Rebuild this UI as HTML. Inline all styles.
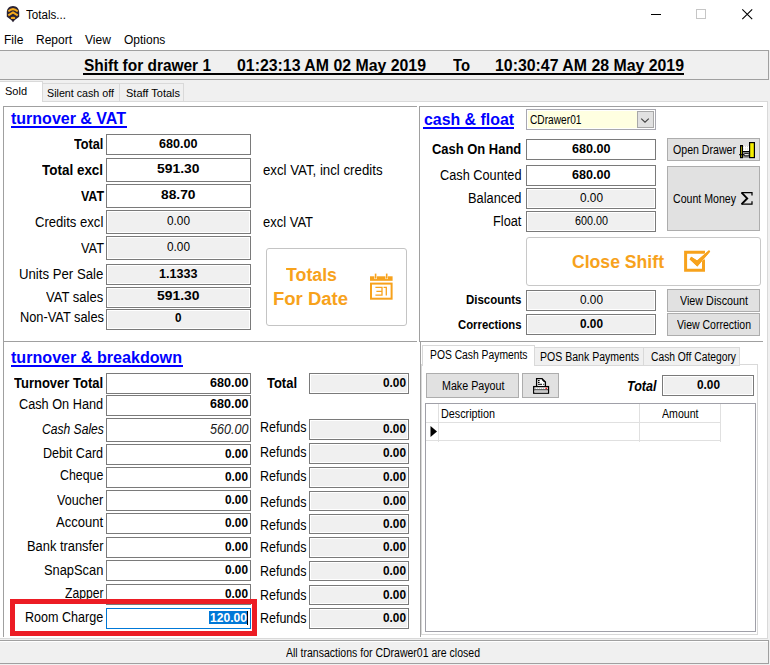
<!DOCTYPE html>
<html><head><meta charset="utf-8"><style>
html,body{margin:0;padding:0;width:770px;height:665px;overflow:hidden;background:#f0f0f0;}
.a{position:absolute;}
.t{white-space:pre;}
</style></head><body>
<div class="a" style="left:0px;top:0px;width:770px;height:50px;background:#ffffff;"></div>
<svg class="a" style="left:5px;top:5px" width="16" height="18" viewBox="0 0 16 18">
<path d="M8 1.1 C4.3 1.1 1.8 3.9 1.8 7.4 L1.8 11.7 L6.2 15 L8 17.2 L9.8 15 L14.2 11.7 L14.2 7.4 C14.2 3.9 11.7 1.1 8 1.1 Z" fill="#2b2334"/>
<path d="M3.3 6.4 Q8 1.9 12.7 6.4" stroke="#f6ab1c" stroke-width="2" fill="none"/>
<path d="M3.3 10.4 L8 7.4 L12.7 10.4" stroke="#f6ab1c" stroke-width="2" fill="none"/>
<ellipse cx="8" cy="12.9" rx="2.3" ry="1.2" fill="#f6ab1c"/>
</svg>
<div class="a" style="left:651px;top:14px;width:10px;height:1px;background:#000;"></div>
<div class="a" style="left:696px;top:9px;width:10px;height:10px;border:1px solid #c6c6c6;box-sizing:border-box;"></div>
<svg class="a" style="left:741px;top:8px" width="13" height="13" viewBox="0 0 13 13"><path d="M1.3 1.3 L11.2 11.2 M11.2 1.3 L1.3 11.2" stroke="#000" stroke-width="1.1"/></svg>
<div class="a" style="left:0px;top:50px;width:769px;height:30px;background:#f0f0f0;"></div>
<div class="a" style="left:0px;top:50px;width:769px;height:1px;background:#a0a0a0;"></div>
<div class="a" style="left:0px;top:79px;width:769px;height:1px;background:#a0a0a0;"></div>
<div class="a" style="left:768px;top:50px;width:1px;height:30px;background:#a0a0a0;"></div>
<div class="a" style="left:83px;top:73px;width:601px;height:2px;background:#000;"></div>
<div class="a" style="left:0px;top:101px;width:768px;height:538px;background:#ffffff;border:1px solid #d9d9d9;box-sizing:border-box;border-left:none;"></div>
<div class="a" style="left:42px;top:83px;width:78px;height:19px;background:#f0f0f0;border:1px solid #d9d9d9;box-sizing:border-box;"></div>
<div class="a" style="left:119px;top:83px;width:65px;height:19px;background:#f0f0f0;border:1px solid #d9d9d9;box-sizing:border-box;"></div>
<div class="a" style="left:0px;top:81px;width:43px;height:21px;background:#ffffff;border:1px solid #d9d9d9;box-sizing:border-box;border-bottom:none;border-left:none;"></div>
<div class="a" style="left:0px;top:640px;width:769px;height:24px;background:#f0f0f0;border:1px solid #a0a0a0;box-sizing:border-box;border-left:none;"></div>
<div class="a" style="left:0px;top:641px;width:768px;height:1px;background:#ffffff;"></div>
<div class="a" style="left:3px;top:106px;width:414px;height:1px;background:#a0a0a0;"></div>
<div class="a" style="left:3px;top:106px;width:1px;height:531px;background:#a0a0a0;"></div>
<div class="a" style="left:3px;top:341px;width:414px;height:1px;background:#a0a0a0;"></div>
<div class="a" style="left:419px;top:106px;width:344px;height:1px;background:#a0a0a0;"></div>
<div class="a" style="left:419px;top:106px;width:1px;height:236px;background:#a0a0a0;"></div>
<div class="a" style="left:420px;top:341px;width:343px;height:1px;background:#a0a0a0;"></div>
<div class="a" style="left:420px;top:341px;width:1px;height:296px;background:#a0a0a0;"></div>
<div class="a" style="left:11px;top:126px;width:116px;height:2px;background:#0000ff;"></div>
<div class="a" style="left:106px;top:134px;width:145px;height:21px;background:#fff;border:1px solid #7a7a7a;box-sizing:border-box;"></div>
<div class="a" style="left:106px;top:158px;width:145px;height:24px;background:#fff;border:1px solid #7a7a7a;box-sizing:border-box;"></div>
<div class="a" style="left:106px;top:184px;width:145px;height:24px;background:#fff;border:1px solid #7a7a7a;box-sizing:border-box;"></div>
<div class="a" style="left:106px;top:210px;width:145px;height:24px;background:#f0f0f0;border:1px solid #7a7a7a;box-sizing:border-box;box-shadow:inset 0 0 0 1px #fff;"></div>
<div class="a" style="left:106px;top:236px;width:145px;height:24px;background:#f0f0f0;border:1px solid #7a7a7a;box-sizing:border-box;box-shadow:inset 0 0 0 1px #fff;"></div>
<div class="a" style="left:106px;top:264px;width:145px;height:21px;background:#f0f0f0;border:1px solid #7a7a7a;box-sizing:border-box;box-shadow:inset 0 0 0 1px #fff;"></div>
<div class="a" style="left:106px;top:287px;width:145px;height:21px;background:#f0f0f0;border:1px solid #7a7a7a;box-sizing:border-box;box-shadow:inset 0 0 0 1px #fff;"></div>
<div class="a" style="left:106px;top:309px;width:145px;height:21px;background:#f0f0f0;border:1px solid #7a7a7a;box-sizing:border-box;box-shadow:inset 0 0 0 1px #fff;"></div>
<div class="a" style="left:266px;top:248px;width:141px;height:78px;background:#fff;border:1px solid #c4c4c4;box-sizing:border-box;border-radius:3px;"></div>
<svg class="a" style="left:368px;top:272px" width="27" height="30" viewBox="0 0 27 30">
<rect x="2" y="4.3" width="22.6" height="4.5" fill="#f7a21c"/>
<rect x="6.8" y="1.6" width="1.6" height="5" fill="#f7a21c" stroke="#fff" stroke-width="0.9" paint-order="stroke"/>
<rect x="17.9" y="1.6" width="1.6" height="5" fill="#f7a21c" stroke="#fff" stroke-width="0.9" paint-order="stroke"/>
<rect x="3" y="11.6" width="20.6" height="15.1" fill="none" stroke="#f7a21c" stroke-width="2"/>
<path d="M7.4 15.4 H14 V23.2 H7.4 M8.4 19.3 H14 M15.6 15.4 H18.3 V23.6" fill="none" stroke="#f7a21c" stroke-width="1.3"/>
</svg>
<div class="a" style="left:11px;top:365px;width:172px;height:2px;background:#0000ff;"></div>
<div class="a" style="left:106px;top:373px;width:145px;height:21px;background:#fff;border:1px solid #7a7a7a;box-sizing:border-box;"></div>
<div class="a" style="left:106px;top:395px;width:145px;height:21px;background:#fff;border:1px solid #7a7a7a;box-sizing:border-box;"></div>
<div class="a" style="left:106px;top:418px;width:145px;height:24px;background:#fff;border:1px solid #7a7a7a;box-sizing:border-box;"></div>
<div class="a" style="left:106px;top:444px;width:145px;height:21px;background:#fff;border:1px solid #7a7a7a;box-sizing:border-box;"></div>
<div class="a" style="left:106px;top:467px;width:145px;height:21px;background:#fff;border:1px solid #7a7a7a;box-sizing:border-box;"></div>
<div class="a" style="left:106px;top:490px;width:145px;height:21px;background:#fff;border:1px solid #7a7a7a;box-sizing:border-box;"></div>
<div class="a" style="left:106px;top:513px;width:145px;height:21px;background:#fff;border:1px solid #7a7a7a;box-sizing:border-box;"></div>
<div class="a" style="left:106px;top:537px;width:145px;height:21px;background:#fff;border:1px solid #7a7a7a;box-sizing:border-box;"></div>
<div class="a" style="left:106px;top:560px;width:145px;height:21px;background:#fff;border:1px solid #7a7a7a;box-sizing:border-box;"></div>
<div class="a" style="left:106px;top:584px;width:145px;height:21px;background:#fff;border:1px solid #7a7a7a;box-sizing:border-box;"></div>
<div class="a" style="left:106px;top:608px;width:145px;height:21px;background:#fff;border:1px solid #0078d7;box-sizing:border-box;"></div>
<div class="a" style="left:209px;top:611px;width:38px;height:13px;background:#0078d7;"></div>
<div class="a" style="left:247px;top:611px;width:1px;height:14px;background:#000;"></div>
<div class="a" style="left:309px;top:373px;width:100px;height:21px;background:#f0f0f0;border:1px solid #7a7a7a;box-sizing:border-box;box-shadow:inset 0 0 0 1px #fff;"></div>
<div class="a" style="left:309px;top:419px;width:100px;height:21px;background:#f0f0f0;border:1px solid #7a7a7a;box-sizing:border-box;box-shadow:inset 0 0 0 1px #fff;"></div>
<div class="a" style="left:309px;top:443px;width:100px;height:21px;background:#f0f0f0;border:1px solid #7a7a7a;box-sizing:border-box;box-shadow:inset 0 0 0 1px #fff;"></div>
<div class="a" style="left:309px;top:467px;width:100px;height:21px;background:#f0f0f0;border:1px solid #7a7a7a;box-sizing:border-box;box-shadow:inset 0 0 0 1px #fff;"></div>
<div class="a" style="left:309px;top:491px;width:100px;height:20px;background:#f0f0f0;border:1px solid #7a7a7a;box-sizing:border-box;box-shadow:inset 0 0 0 1px #fff;"></div>
<div class="a" style="left:309px;top:514px;width:100px;height:20px;background:#f0f0f0;border:1px solid #7a7a7a;box-sizing:border-box;box-shadow:inset 0 0 0 1px #fff;"></div>
<div class="a" style="left:309px;top:537px;width:100px;height:21px;background:#f0f0f0;border:1px solid #7a7a7a;box-sizing:border-box;box-shadow:inset 0 0 0 1px #fff;"></div>
<div class="a" style="left:309px;top:561px;width:100px;height:20px;background:#f0f0f0;border:1px solid #7a7a7a;box-sizing:border-box;box-shadow:inset 0 0 0 1px #fff;"></div>
<div class="a" style="left:309px;top:585px;width:100px;height:20px;background:#f0f0f0;border:1px solid #7a7a7a;box-sizing:border-box;box-shadow:inset 0 0 0 1px #fff;"></div>
<div class="a" style="left:309px;top:608px;width:100px;height:21px;background:#f0f0f0;border:1px solid #7a7a7a;box-sizing:border-box;box-shadow:inset 0 0 0 1px #fff;"></div>
<div class="a" style="left:423px;top:127px;width:91px;height:2px;background:#0000ff;"></div>
<div class="a" style="left:526px;top:109px;width:130px;height:21px;background:#ffffe1;border:1px solid #a8a8b0;box-sizing:border-box;box-shadow:inset 0 0 0 1px #fff;"></div>
<div class="a" style="left:637px;top:111px;width:17px;height:17px;background:#e1e1e1;border:1px solid #a8a8a8;box-sizing:border-box;"></div>
<svg class="a" style="left:640px;top:115px" width="11" height="11" viewBox="0 0 11 11"><path d="M1.2 3.6 L5 7.2 L8.8 3.6" stroke="#404040" stroke-width="1.1" fill="none"/></svg>
<div class="a" style="left:526px;top:139px;width:130px;height:21px;background:#fff;border:1px solid #7a7a7a;box-sizing:border-box;"></div>
<div class="a" style="left:526px;top:165px;width:130px;height:21px;background:#fff;border:1px solid #7a7a7a;box-sizing:border-box;"></div>
<div class="a" style="left:526px;top:188px;width:130px;height:21px;background:#f0f0f0;border:1px solid #7a7a7a;box-sizing:border-box;box-shadow:inset 0 0 0 1px #fff;"></div>
<div class="a" style="left:526px;top:211px;width:130px;height:21px;background:#f0f0f0;border:1px solid #7a7a7a;box-sizing:border-box;box-shadow:inset 0 0 0 1px #fff;"></div>
<div class="a" style="left:667px;top:138px;width:93px;height:23px;background:#e1e1e1;border:1px solid #adadad;box-sizing:border-box;"></div>
<svg class="a" style="left:738px;top:141px" width="19" height="18" viewBox="0 0 19 18">
<rect x="5" y="5" width="6.5" height="5.6" fill="#ffffff"/>
<path d="M5 5.6 H11 M5 8 H11" stroke="#c0c0c0" stroke-width="0.8" stroke-dasharray="1 1"/>
<rect x="5" y="10.8" width="6.5" height="6" fill="#8c8c8c"/>
<path d="M5 10.5 H11.5" stroke="#000" stroke-width="1"/>
<rect x="11.6" y="1.6" width="4.8" height="15" fill="#f5ee00" stroke="#000" stroke-width="1.2"/>
<rect x="2.6" y="4.6" width="1.8" height="12" fill="#f5ee00" stroke="#000" stroke-width="1.2"/>
<path d="M1 13.7 H6" stroke="#000" stroke-width="1"/>
<rect x="6" y="12.6" width="5.2" height="2.2" rx="1" fill="#fff" stroke="#000" stroke-width="0.9"/>
</svg>
<div class="a" style="left:667px;top:166px;width:93px;height:65px;background:#e1e1e1;border:1px solid #adadad;box-sizing:border-box;"></div>
<svg class="a" style="left:739px;top:191px" width="16" height="16" viewBox="0 0 16 16"><path d="M13 4.6 V1.6 H2.4 M2.4 13.1 H13 V10.2" fill="none" stroke="#000" stroke-width="1.25"/><path d="M2.6 1.6 L8.2 7.4 L2.6 13.1" fill="none" stroke="#000" stroke-width="1.9"/></svg>
<div class="a" style="left:526px;top:237px;width:235px;height:49px;background:#fff;border:1px solid #c8c8c8;box-sizing:border-box;border-radius:3px;"></div>
<svg class="a" style="left:683px;top:249px" width="30" height="25" viewBox="0 0 30 25">
<path d="M22 3.3 H2.6 V21.2 H20.5 V10.5" fill="none" stroke="#f7a21c" stroke-width="3"/>
<path d="M8.2 7.8 L14.1 11.6 L26 1.2 L27.2 2.4 L14.3 17.6 L6.6 10.2 Z" fill="#f7a21c" stroke="#fff" stroke-width="0.8" paint-order="stroke"/>
<path d="M8.2 7.8 L14.1 11.6 L26 1.2 L27.2 2.4 L14.3 17.6 L6.6 10.2 Z" fill="#f7a21c"/>
</svg>
<div class="a" style="left:526px;top:290px;width:130px;height:21px;background:#f0f0f0;border:1px solid #7a7a7a;box-sizing:border-box;box-shadow:inset 0 0 0 1px #fff;"></div>
<div class="a" style="left:526px;top:314px;width:130px;height:21px;background:#f0f0f0;border:1px solid #7a7a7a;box-sizing:border-box;box-shadow:inset 0 0 0 1px #fff;"></div>
<div class="a" style="left:667px;top:289px;width:93px;height:23px;background:#e1e1e1;border:1px solid #adadad;box-sizing:border-box;"></div>
<div class="a" style="left:667px;top:313px;width:93px;height:23px;background:#e1e1e1;border:1px solid #adadad;box-sizing:border-box;"></div>
<div class="a" style="left:421px;top:364px;width:337px;height:271px;background:#fff;border:1px solid #d9d9d9;box-sizing:border-box;"></div>
<div class="a" style="left:534px;top:347px;width:110px;height:19px;background:#f0f0f0;border:1px solid #d9d9d9;box-sizing:border-box;"></div>
<div class="a" style="left:643px;top:347px;width:97px;height:19px;background:#f0f0f0;border:1px solid #d9d9d9;box-sizing:border-box;"></div>
<div class="a" style="left:422px;top:345px;width:113px;height:21px;background:#fff;border:1px solid #d9d9d9;box-sizing:border-box;border-bottom:none;"></div>
<div class="a" style="left:426px;top:373px;width:93px;height:25px;background:#e1e1e1;border:1px solid #adadad;box-sizing:border-box;"></div>
<div class="a" style="left:522px;top:373px;width:37px;height:25px;background:#e1e1e1;border:1px solid #adadad;box-sizing:border-box;"></div>
<svg class="a" style="left:532px;top:377px" width="18" height="18" viewBox="0 0 18 18">
<path d="M4.6 9.2 V1.6 H10 L13.4 5 V9.2" fill="#fff" stroke="#000" stroke-width="1.3"/>
<path d="M10 1.6 Q10.4 4.6 13.4 5" fill="none" stroke="#000" stroke-width="1"/>
<rect x="6" y="3" width="1.6" height="1.2" fill="#000"/>
<rect x="6" y="5" width="1.6" height="1" fill="#000"/>
<rect x="6" y="6.8" width="4" height="1" fill="#000"/>
<rect x="11.2" y="6.8" width="1" height="1" fill="#000"/>
<rect x="1.7" y="9.6" width="14.8" height="6.6" fill="#fff" stroke="#000" stroke-width="1.3"/>
<path d="M2.3 12.9 H16" stroke="#000" stroke-width="1"/>
<rect x="2.4" y="13.4" width="13.5" height="2.2" fill="#c8c8c8"/>
<path d="M3 11.3 H13" stroke="#b0b0b0" stroke-width="0.8" stroke-dasharray="1 1"/>
<circle cx="14.2" cy="11.4" r="0.8" fill="#f00"/>
</svg>
<div class="a" style="left:662px;top:375px;width:92px;height:21px;background:#f0f0f0;border:1px solid #7a7a7a;box-sizing:border-box;box-shadow:inset 0 0 0 1px #fff;"></div>
<div class="a" style="left:425px;top:403px;width:331px;height:229px;background:#fff;border:1px solid #a0a0a8;box-sizing:border-box;"></div>
<div class="a" style="left:438px;top:404px;width:1px;height:38px;background:#e0e0e0;"></div>
<div class="a" style="left:426px;top:422px;width:295px;height:1px;background:#e0e0e0;"></div>
<div class="a" style="left:426px;top:440px;width:295px;height:1px;background:#e0e0e0;"></div>
<div class="a" style="left:639px;top:404px;width:1px;height:38px;background:#e0e0e0;"></div>
<div class="a" style="left:720px;top:404px;width:1px;height:38px;background:#e0e0e0;"></div>
<svg class="a" style="left:430px;top:425px" width="8" height="13" viewBox="0 0 8 13"><path d="M0.5 1 L7 6.5 L0.5 12 Z" fill="#000"/></svg>
<div class="a t" style="left:26.00px;top:9px;font:normal normal 12px/12px 'Liberation Sans', sans-serif;color:#000;transform:scaleX(0.9671);transform-origin:0 0;">Totals...</div>
<div class="a t" style="left:4.00px;top:34px;font:normal normal 12px/12px 'Liberation Sans', sans-serif;color:#000;">File</div>
<div class="a t" style="left:36.00px;top:34px;font:normal normal 12px/12px 'Liberation Sans', sans-serif;color:#000;">Report</div>
<div class="a t" style="left:85.00px;top:34px;font:normal normal 12px/12px 'Liberation Sans', sans-serif;color:#000;">View</div>
<div class="a t" style="left:124.00px;top:34px;font:normal normal 12px/12px 'Liberation Sans', sans-serif;color:#000;">Options</div>
<div class="a t" style="left:84.00px;top:58px;font:normal bold 16px/16px 'Liberation Sans', sans-serif;color:#000;transform:scaleX(0.9652);transform-origin:0 0;">Shift for drawer 1</div>
<div class="a t" style="left:237.00px;top:58px;font:normal bold 16px/16px 'Liberation Sans', sans-serif;color:#000;transform:scaleX(0.9914);transform-origin:0 0;">01:23:13 AM 02 May 2019</div>
<div class="a t" style="left:453.00px;top:58px;font:normal bold 16px/16px 'Liberation Sans', sans-serif;color:#000;transform:scaleX(0.9260);transform-origin:0 0;">To</div>
<div class="a t" style="left:495.00px;top:58px;font:normal bold 16px/16px 'Liberation Sans', sans-serif;color:#000;transform:scaleX(0.9914);transform-origin:0 0;">10:30:47 AM 28 May 2019</div>
<div class="a t" style="left:5.00px;top:86px;font:normal normal 11px/11px 'Liberation Sans', sans-serif;color:#000;">Sold</div>
<div class="a t" style="left:47.00px;top:88px;font:normal normal 11px/11px 'Liberation Sans', sans-serif;color:#000;transform:scaleX(0.9723);transform-origin:0 0;">Silent cash off</div>
<div class="a t" style="left:126.00px;top:88px;font:normal normal 11px/11px 'Liberation Sans', sans-serif;color:#000;">Staff Totals</div>
<div class="a t" style="left:286.00px;top:647px;font:normal normal 12px/12px 'Liberation Sans', sans-serif;color:#000;transform:scaleX(0.8761);transform-origin:0 0;">All transactions for CDrawer01 are closed</div>
<div class="a t" style="left:11.00px;top:111px;font:normal bold 16px/16px 'Liberation Sans', sans-serif;color:#0000ff;">turnover &amp; VAT</div>
<div class="a t" style="left:74.10px;top:137px;font:normal bold 14px/14px 'Liberation Sans', sans-serif;color:#000;transform:scaleX(0.9072);transform-origin:0 0;">Total</div>
<div class="a t" style="left:158.75px;top:138px;font:normal bold 12px/12px 'Liberation Sans', sans-serif;color:#000;transform:scaleX(1.0490);transform-origin:0 0;">680.00</div>
<div class="a t" style="left:42.40px;top:163px;font:normal bold 14px/14px 'Liberation Sans', sans-serif;color:#000;transform:scaleX(0.9615);transform-origin:0 0;">Total excl</div>
<div class="a t" style="left:156.75px;top:163px;font:normal bold 12px/12px 'Liberation Sans', sans-serif;color:#000;transform:scaleX(1.1579);transform-origin:0 0;">591.30</div>
<div class="a t" style="left:80.50px;top:189px;font:normal bold 14px/14px 'Liberation Sans', sans-serif;color:#000;transform:scaleX(0.8873);transform-origin:0 0;">VAT</div>
<div class="a t" style="left:160.75px;top:189px;font:normal bold 12px/12px 'Liberation Sans', sans-serif;color:#000;transform:scaleX(1.1488);transform-origin:0 0;">88.70</div>
<div class="a t" style="left:35.20px;top:215px;font:normal normal 14px/14px 'Liberation Sans', sans-serif;color:#000;transform:scaleX(0.9338);transform-origin:0 0;">Credits excl</div>
<div class="a t" style="left:166.50px;top:215px;font:normal normal 12px/12px 'Liberation Sans', sans-serif;color:#000;transform:scaleX(0.9846);transform-origin:0 0;">0.00</div>
<div class="a t" style="left:80.50px;top:241px;font:normal normal 14px/14px 'Liberation Sans', sans-serif;color:#000;transform:scaleX(0.9143);transform-origin:0 0;">VAT</div>
<div class="a t" style="left:166.50px;top:241px;font:normal normal 12px/12px 'Liberation Sans', sans-serif;color:#000;transform:scaleX(0.9846);transform-origin:0 0;">0.00</div>
<div class="a t" style="left:19.20px;top:267px;font:normal normal 14px/14px 'Liberation Sans', sans-serif;color:#000;transform:scaleX(0.9421);transform-origin:0 0;">Units Per Sale</div>
<div class="a t" style="left:158.75px;top:268px;font:normal bold 12px/12px 'Liberation Sans', sans-serif;color:#000;transform:scaleX(1.0490);transform-origin:0 0;">1.1333</div>
<div class="a t" style="left:46.30px;top:290px;font:normal normal 14px/14px 'Liberation Sans', sans-serif;color:#000;transform:scaleX(0.9306);transform-origin:0 0;">VAT sales</div>
<div class="a t" style="left:156.75px;top:290px;font:normal bold 12px/12px 'Liberation Sans', sans-serif;color:#000;transform:scaleX(1.1579);transform-origin:0 0;">591.30</div>
<div class="a t" style="left:19.50px;top:310px;font:normal normal 14px/14px 'Liberation Sans', sans-serif;color:#000;transform:scaleX(0.9148);transform-origin:0 0;">Non-VAT sales</div>
<div class="a t" style="left:174.75px;top:312px;font:normal bold 12px/12px 'Liberation Sans', sans-serif;color:#000;transform:scaleX(0.9720);transform-origin:0 0;">0</div>
<div class="a t" style="left:263.00px;top:163px;font:normal normal 14px/14px 'Liberation Sans', sans-serif;color:#000;transform:scaleX(0.9462);transform-origin:0 0;">excl VAT, incl credits</div>
<div class="a t" style="left:262.50px;top:215px;font:normal normal 14px/14px 'Liberation Sans', sans-serif;color:#000;transform:scaleX(0.9270);transform-origin:0 0;">excl VAT</div>
<div class="a t" style="left:285.50px;top:266px;font:normal bold 18px/18px 'Liberation Sans', sans-serif;color:#f7a21c;transform:scaleX(0.9870);transform-origin:0 0;">Totals</div>
<div class="a t" style="left:273.00px;top:290px;font:normal bold 18px/18px 'Liberation Sans', sans-serif;color:#f7a21c;transform:scaleX(1.0272);transform-origin:0 0;">For Date</div>
<div class="a t" style="left:11.00px;top:350px;font:normal bold 16px/16px 'Liberation Sans', sans-serif;color:#0000ff;transform:scaleX(1.0070);transform-origin:0 0;">turnover &amp; breakdown</div>
<div class="a t" style="left:14.40px;top:375.5px;font:normal bold 14px/14px 'Liberation Sans', sans-serif;color:#000;transform:scaleX(0.9287);transform-origin:0 0;">Turnover Total</div>
<div class="a t" style="left:209.50px;top:377px;font:normal bold 12px/12px 'Liberation Sans', sans-serif;color:#000;transform:scaleX(1.0490);transform-origin:0 0;">680.00</div>
<div class="a t" style="left:19.40px;top:397px;font:normal normal 14px/14px 'Liberation Sans', sans-serif;color:#000;transform:scaleX(0.9081);transform-origin:0 0;">Cash On Hand</div>
<div class="a t" style="left:209.50px;top:398px;font:normal bold 12px/12px 'Liberation Sans', sans-serif;color:#000;transform:scaleX(1.0490);transform-origin:0 0;">680.00</div>
<div class="a t" style="left:41.60px;top:422px;font:italic normal 14px/14px 'Liberation Sans', sans-serif;color:#000;transform:scaleX(0.8646);transform-origin:0 0;">Cash Sales</div>
<div class="a t" style="left:210.00px;top:422px;font:italic normal 14px/14px 'Liberation Sans', sans-serif;color:#1a1a1a;transform:scaleX(0.8989);transform-origin:0 0;">560.00</div>
<div class="a t" style="left:43.40px;top:445.5px;font:normal normal 14px/14px 'Liberation Sans', sans-serif;color:#000;transform:scaleX(0.8981);transform-origin:0 0;">Debit Card</div>
<div class="a t" style="left:225.00px;top:448px;font:normal bold 12px/12px 'Liberation Sans', sans-serif;color:#000;transform:scaleX(0.9846);transform-origin:0 0;">0.00</div>
<div class="a t" style="left:60.20px;top:468px;font:normal normal 14px/14px 'Liberation Sans', sans-serif;color:#000;transform:scaleX(0.8828);transform-origin:0 0;">Cheque</div>
<div class="a t" style="left:225.00px;top:471px;font:normal bold 12px/12px 'Liberation Sans', sans-serif;color:#000;transform:scaleX(0.9846);transform-origin:0 0;">0.00</div>
<div class="a t" style="left:57.30px;top:493px;font:normal normal 14px/14px 'Liberation Sans', sans-serif;color:#000;transform:scaleX(0.8993);transform-origin:0 0;">Voucher</div>
<div class="a t" style="left:225.00px;top:494px;font:normal bold 12px/12px 'Liberation Sans', sans-serif;color:#000;transform:scaleX(0.9846);transform-origin:0 0;">0.00</div>
<div class="a t" style="left:56.30px;top:515px;font:normal normal 14px/14px 'Liberation Sans', sans-serif;color:#000;transform:scaleX(0.9329);transform-origin:0 0;">Account</div>
<div class="a t" style="left:225.00px;top:517px;font:normal bold 12px/12px 'Liberation Sans', sans-serif;color:#000;transform:scaleX(0.9846);transform-origin:0 0;">0.00</div>
<div class="a t" style="left:27.00px;top:539px;font:normal normal 14px/14px 'Liberation Sans', sans-serif;color:#000;transform:scaleX(0.9187);transform-origin:0 0;">Bank transfer</div>
<div class="a t" style="left:225.00px;top:541px;font:normal bold 12px/12px 'Liberation Sans', sans-serif;color:#000;transform:scaleX(0.9846);transform-origin:0 0;">0.00</div>
<div class="a t" style="left:44.20px;top:563px;font:normal normal 14px/14px 'Liberation Sans', sans-serif;color:#000;transform:scaleX(0.9178);transform-origin:0 0;">SnapScan</div>
<div class="a t" style="left:225.00px;top:564px;font:normal bold 12px/12px 'Liberation Sans', sans-serif;color:#000;transform:scaleX(0.9846);transform-origin:0 0;">0.00</div>
<div class="a t" style="left:65.00px;top:586px;font:normal normal 14px/14px 'Liberation Sans', sans-serif;color:#000;transform:scaleX(0.8679);transform-origin:0 0;">Zapper</div>
<div class="a t" style="left:225.00px;top:588px;font:normal bold 12px/12px 'Liberation Sans', sans-serif;color:#000;transform:scaleX(0.9846);transform-origin:0 0;">0.00</div>
<div class="a t" style="left:25.30px;top:610px;font:normal normal 14px/14px 'Liberation Sans', sans-serif;color:#000;transform:scaleX(0.8972);transform-origin:0 0;">Room Charge</div>
<div class="a t" style="left:210.00px;top:612px;font:normal bold 12px/12px 'Liberation Sans', sans-serif;color:#fff;transform:scaleX(1.0081);transform-origin:0 0;">120.00</div>
<div class="a t" style="left:266.50px;top:375.5px;font:normal bold 14px/14px 'Liberation Sans', sans-serif;color:#000;transform:scaleX(0.9257);transform-origin:0 0;">Total</div>
<div class="a t" style="left:383.00px;top:377px;font:normal bold 12px/12px 'Liberation Sans', sans-serif;color:#000;transform:scaleX(0.9846);transform-origin:0 0;">0.00</div>
<div class="a t" style="left:260.00px;top:420px;font:normal normal 14px/14px 'Liberation Sans', sans-serif;color:#000;transform:scaleX(0.8916);transform-origin:0 0;">Refunds</div>
<div class="a t" style="left:383.00px;top:423px;font:normal bold 12px/12px 'Liberation Sans', sans-serif;color:#000;transform:scaleX(0.9846);transform-origin:0 0;">0.00</div>
<div class="a t" style="left:260.00px;top:445px;font:normal normal 14px/14px 'Liberation Sans', sans-serif;color:#000;transform:scaleX(0.8916);transform-origin:0 0;">Refunds</div>
<div class="a t" style="left:383.00px;top:447px;font:normal bold 12px/12px 'Liberation Sans', sans-serif;color:#000;transform:scaleX(0.9846);transform-origin:0 0;">0.00</div>
<div class="a t" style="left:260.00px;top:469px;font:normal normal 14px/14px 'Liberation Sans', sans-serif;color:#000;transform:scaleX(0.8916);transform-origin:0 0;">Refunds</div>
<div class="a t" style="left:383.00px;top:471px;font:normal bold 12px/12px 'Liberation Sans', sans-serif;color:#000;transform:scaleX(0.9846);transform-origin:0 0;">0.00</div>
<div class="a t" style="left:260.00px;top:495px;font:normal normal 14px/14px 'Liberation Sans', sans-serif;color:#000;transform:scaleX(0.8916);transform-origin:0 0;">Refunds</div>
<div class="a t" style="left:383.00px;top:495px;font:normal bold 12px/12px 'Liberation Sans', sans-serif;color:#000;transform:scaleX(0.9846);transform-origin:0 0;">0.00</div>
<div class="a t" style="left:260.00px;top:517.5px;font:normal normal 14px/14px 'Liberation Sans', sans-serif;color:#000;transform:scaleX(0.8916);transform-origin:0 0;">Refunds</div>
<div class="a t" style="left:383.00px;top:518px;font:normal bold 12px/12px 'Liberation Sans', sans-serif;color:#000;transform:scaleX(0.9846);transform-origin:0 0;">0.00</div>
<div class="a t" style="left:260.00px;top:540px;font:normal normal 14px/14px 'Liberation Sans', sans-serif;color:#000;transform:scaleX(0.8916);transform-origin:0 0;">Refunds</div>
<div class="a t" style="left:383.00px;top:541px;font:normal bold 12px/12px 'Liberation Sans', sans-serif;color:#000;transform:scaleX(0.9846);transform-origin:0 0;">0.00</div>
<div class="a t" style="left:260.00px;top:563.5px;font:normal normal 14px/14px 'Liberation Sans', sans-serif;color:#000;transform:scaleX(0.8916);transform-origin:0 0;">Refunds</div>
<div class="a t" style="left:383.00px;top:565px;font:normal bold 12px/12px 'Liberation Sans', sans-serif;color:#000;transform:scaleX(0.9846);transform-origin:0 0;">0.00</div>
<div class="a t" style="left:260.00px;top:587.5px;font:normal normal 14px/14px 'Liberation Sans', sans-serif;color:#000;transform:scaleX(0.8916);transform-origin:0 0;">Refunds</div>
<div class="a t" style="left:383.00px;top:589px;font:normal bold 12px/12px 'Liberation Sans', sans-serif;color:#000;transform:scaleX(0.9846);transform-origin:0 0;">0.00</div>
<div class="a t" style="left:260.00px;top:611px;font:normal normal 14px/14px 'Liberation Sans', sans-serif;color:#000;transform:scaleX(0.8916);transform-origin:0 0;">Refunds</div>
<div class="a t" style="left:383.00px;top:612px;font:normal bold 12px/12px 'Liberation Sans', sans-serif;color:#000;transform:scaleX(0.9846);transform-origin:0 0;">0.00</div>
<div class="a t" style="left:423.50px;top:112px;font:normal bold 16px/16px 'Liberation Sans', sans-serif;color:#0000ff;transform:scaleX(0.9924);transform-origin:0 0;">cash &amp; float</div>
<div class="a t" style="left:530.00px;top:113.5px;font:normal normal 12px/12px 'Liberation Sans', sans-serif;color:#000;transform:scaleX(0.8486);transform-origin:0 0;">CDrawer01</div>
<div class="a t" style="left:432.30px;top:141.5px;font:normal bold 14px/14px 'Liberation Sans', sans-serif;color:#000;transform:scaleX(0.9247);transform-origin:0 0;">Cash On Hand</div>
<div class="a t" style="left:571.75px;top:142.5px;font:normal bold 12px/12px 'Liberation Sans', sans-serif;color:#000;transform:scaleX(1.0490);transform-origin:0 0;">680.00</div>
<div class="a t" style="left:440.00px;top:167.5px;font:normal normal 14px/14px 'Liberation Sans', sans-serif;color:#000;transform:scaleX(0.9105);transform-origin:0 0;">Cash Counted</div>
<div class="a t" style="left:571.75px;top:169px;font:normal bold 12px/12px 'Liberation Sans', sans-serif;color:#000;transform:scaleX(1.0490);transform-origin:0 0;">680.00</div>
<div class="a t" style="left:468.00px;top:190.5px;font:normal normal 14px/14px 'Liberation Sans', sans-serif;color:#000;transform:scaleX(0.9162);transform-origin:0 0;">Balanced</div>
<div class="a t" style="left:579.50px;top:191.5px;font:normal normal 12px/12px 'Liberation Sans', sans-serif;color:#000;transform:scaleX(0.9846);transform-origin:0 0;">0.00</div>
<div class="a t" style="left:493.10px;top:213.5px;font:normal normal 14px/14px 'Liberation Sans', sans-serif;color:#000;transform:scaleX(0.9124);transform-origin:0 0;">Float</div>
<div class="a t" style="left:574.50px;top:214.5px;font:normal normal 12px/12px 'Liberation Sans', sans-serif;color:#000;transform:scaleX(0.8991);transform-origin:0 0;">600.00</div>
<div class="a t" style="left:672.50px;top:144px;font:normal normal 12px/12px 'Liberation Sans', sans-serif;color:#000;transform:scaleX(0.8827);transform-origin:0 0;">Open Drawer</div>
<div class="a t" style="left:672.50px;top:193px;font:normal normal 12px/12px 'Liberation Sans', sans-serif;color:#000;transform:scaleX(0.8827);transform-origin:0 0;">Count Money</div>
<div class="a t" style="left:571.50px;top:253px;font:normal bold 18px/18px 'Liberation Sans', sans-serif;color:#f7a21c;transform:scaleX(0.9786);transform-origin:0 0;">Close Shift</div>
<div class="a t" style="left:466.00px;top:294px;font:normal bold 12px/12px 'Liberation Sans', sans-serif;color:#000;transform:scaleX(0.9566);transform-origin:0 0;">Discounts</div>
<div class="a t" style="left:579.50px;top:294px;font:normal normal 12px/12px 'Liberation Sans', sans-serif;color:#000;transform:scaleX(0.9846);transform-origin:0 0;">0.00</div>
<div class="a t" style="left:458.00px;top:319px;font:normal bold 12px/12px 'Liberation Sans', sans-serif;color:#000;transform:scaleX(0.9427);transform-origin:0 0;">Corrections</div>
<div class="a t" style="left:579.50px;top:317.5px;font:normal bold 12px/12px 'Liberation Sans', sans-serif;color:#000;transform:scaleX(0.9846);transform-origin:0 0;">0.00</div>
<div class="a t" style="left:680.00px;top:295px;font:normal normal 12px/12px 'Liberation Sans', sans-serif;color:#000;transform:scaleX(0.8968);transform-origin:0 0;">View Discount</div>
<div class="a t" style="left:677.00px;top:319px;font:normal normal 12px/12px 'Liberation Sans', sans-serif;color:#000;transform:scaleX(0.8759);transform-origin:0 0;">View Correction</div>
<div class="a t" style="left:430.00px;top:349px;font:normal normal 12px/12px 'Liberation Sans', sans-serif;color:#000;transform:scaleX(0.8599);transform-origin:0 0;">POS Cash Payments</div>
<div class="a t" style="left:539.50px;top:351px;font:normal normal 12px/12px 'Liberation Sans', sans-serif;color:#000;transform:scaleX(0.8783);transform-origin:0 0;">POS Bank Payments</div>
<div class="a t" style="left:650.50px;top:351px;font:normal normal 12px/12px 'Liberation Sans', sans-serif;color:#000;transform:scaleX(0.8571);transform-origin:0 0;">Cash Off Category</div>
<div class="a t" style="left:441.50px;top:380px;font:normal normal 12px/12px 'Liberation Sans', sans-serif;color:#000;transform:scaleX(0.8923);transform-origin:0 0;">Make Payout</div>
<div class="a t" style="left:627.00px;top:379px;font:italic bold 14px/14px 'Liberation Sans', sans-serif;color:#000;transform:scaleX(0.8961);transform-origin:0 0;">Total</div>
<div class="a t" style="left:696.50px;top:378.5px;font:normal bold 12px/12px 'Liberation Sans', sans-serif;color:#000;transform:scaleX(0.9846);transform-origin:0 0;">0.00</div>
<div class="a t" style="left:441.00px;top:408px;font:normal normal 12px/12px 'Liberation Sans', sans-serif;color:#000;transform:scaleX(0.8995);transform-origin:0 0;">Description</div>
<div class="a t" style="left:662.00px;top:407.5px;font:normal normal 12px/12px 'Liberation Sans', sans-serif;color:#000;transform:scaleX(0.8825);transform-origin:0 0;">Amount</div>
<div class="a" style="left:10px;top:599px;width:247px;height:37px;border:5px solid #ec1c24;box-sizing:border-box;"></div>
</body></html>
